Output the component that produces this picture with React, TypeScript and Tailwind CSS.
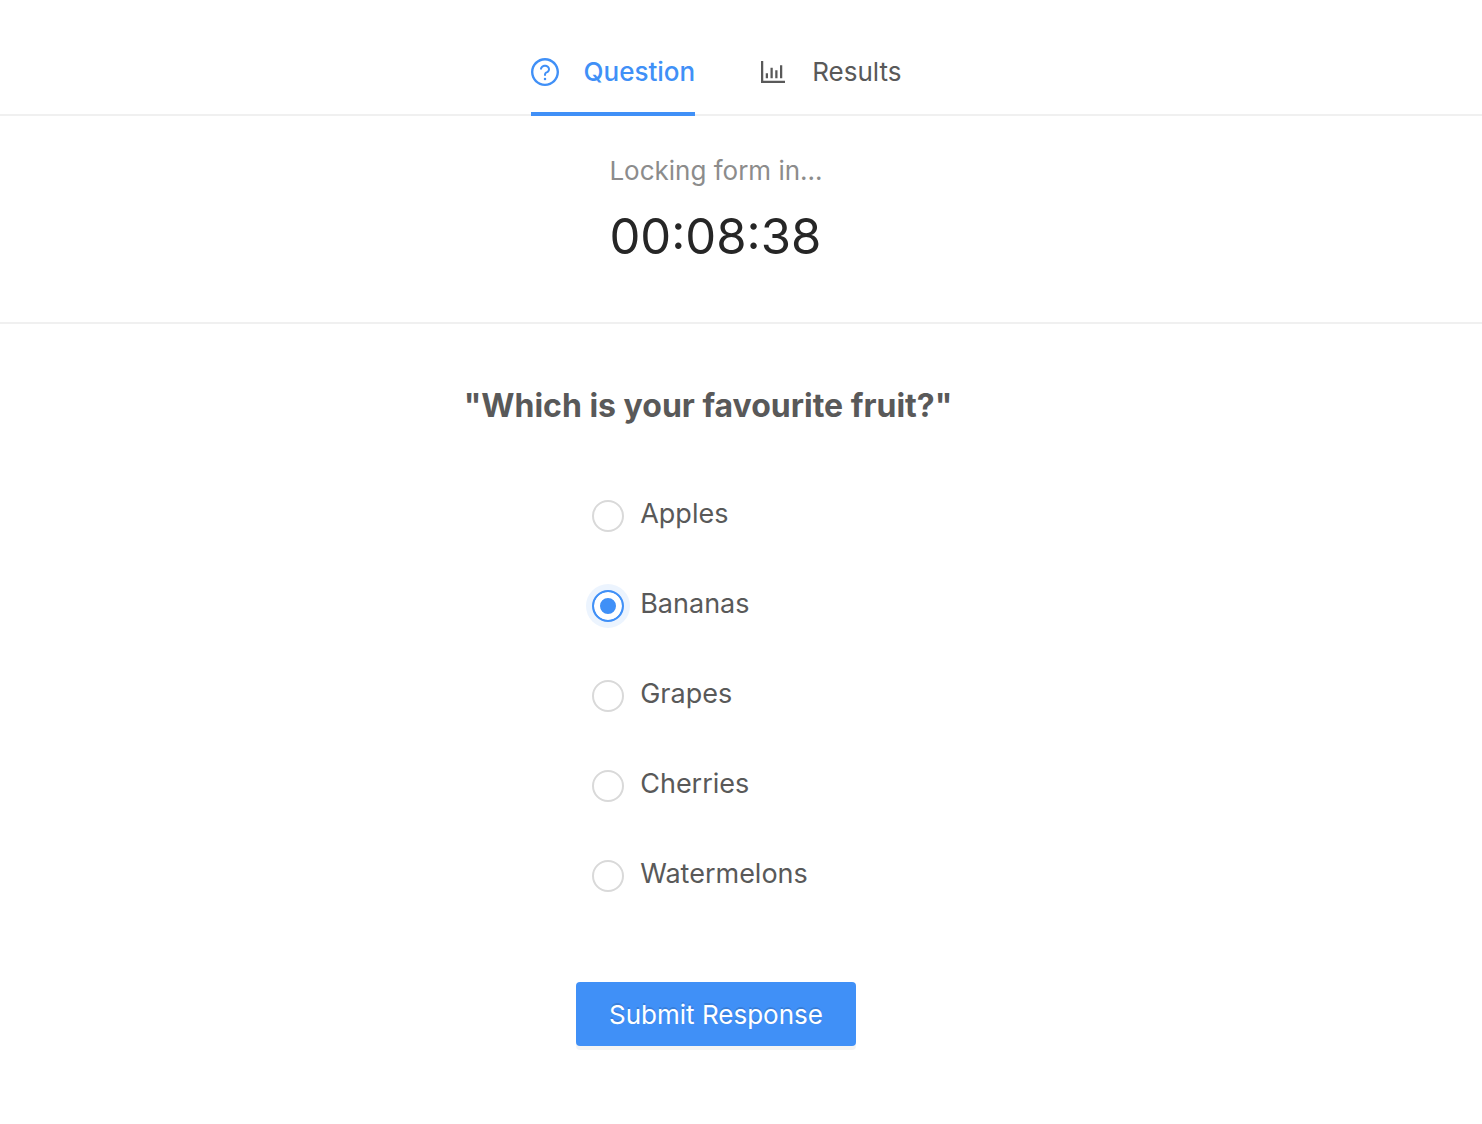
import { useState } from "react";
import { AiOutlineBarChart, AiOutlineQuestionCircle } from "react-icons/ai";

const fruits = ["Apples", "Bananas", "Grapes", "Cherries", "Watermelons"];

export default function App() {
  const [choice, setChoice] = useState("Bananas");
  return (
    <div className="min-h-screen bg-white font-['Inter',sans-serif] text-[#595959]">
      <nav className="flex justify-center gap-16 border-b-2 border-[#f0f0f0] pt-12 pr-[50px] text-[26px] leading-12">
        <button className="-mb-[2px] flex items-center gap-[25px] border-b-4 border-[#4090f7] pb-4 font-medium text-[#4090f7]">
          <AiOutlineQuestionCircle size={28} viewBox="64 64 896 896" aria-hidden="true" />
          Question
        </button>
        <button className="-mb-[2px] flex items-center gap-[25px] border-b-4 border-transparent pb-4">
          <AiOutlineBarChart size={28} viewBox="64 64 896 896" aria-hidden="true" />
          Results
        </button>
      </nav>
      <section className="flex flex-col items-center border-b-2 border-[#f0f0f0] pt-8 pr-[50px] pb-12">
        <div>
          <p className="text-[26px] leading-[46px] text-[#8c8c8c]">Locking form in...</p>
          <p className="mt-1.5 text-[49px] leading-[74px] text-[#262626]">00:08:38</p>
        </div>
      </section>
      <form className="flex flex-col items-center pt-14 pr-[50px]" onSubmit={(e) => e.preventDefault()}>
        <fieldset className="flex flex-col items-center">
          <legend className="pr-4 text-[32px] leading-[52px] font-bold">"Which is your favourite fruit?"</legend>
          <div className="mt-[37px] flex flex-col pr-8">
            {fruits.map((fruit) => (
              <label key={fruit} className="flex h-[90px] items-center gap-4 text-[27px]">
                <input
                  type="radio"
                  name="fruit"
                  value={fruit}
                  checked={choice === fruit}
                  onChange={() => setChoice(fruit)}
                  className="mt-1 size-8 appearance-none rounded-full border-2 border-[#d9d9d9] bg-white checked:border-[#4090f7] checked:bg-[#4090f7] checked:shadow-[inset_0_0_0_6px_#ffffff,0_0_0_6px_#ecf4fe]"
                />
                {fruit}
              </label>
            ))}
          </div>
        </fieldset>
        <button className="mt-[63px] h-16 rounded-sm bg-[#4090f7] px-[33px] text-[26px] text-white shadow-[0_4px_0_rgba(0,0,0,0.045)] [text-shadow:0_-2px_0_rgba(0,0,0,0.12)]">
          Submit Response
        </button>
      </form>
    </div>
  );
}
